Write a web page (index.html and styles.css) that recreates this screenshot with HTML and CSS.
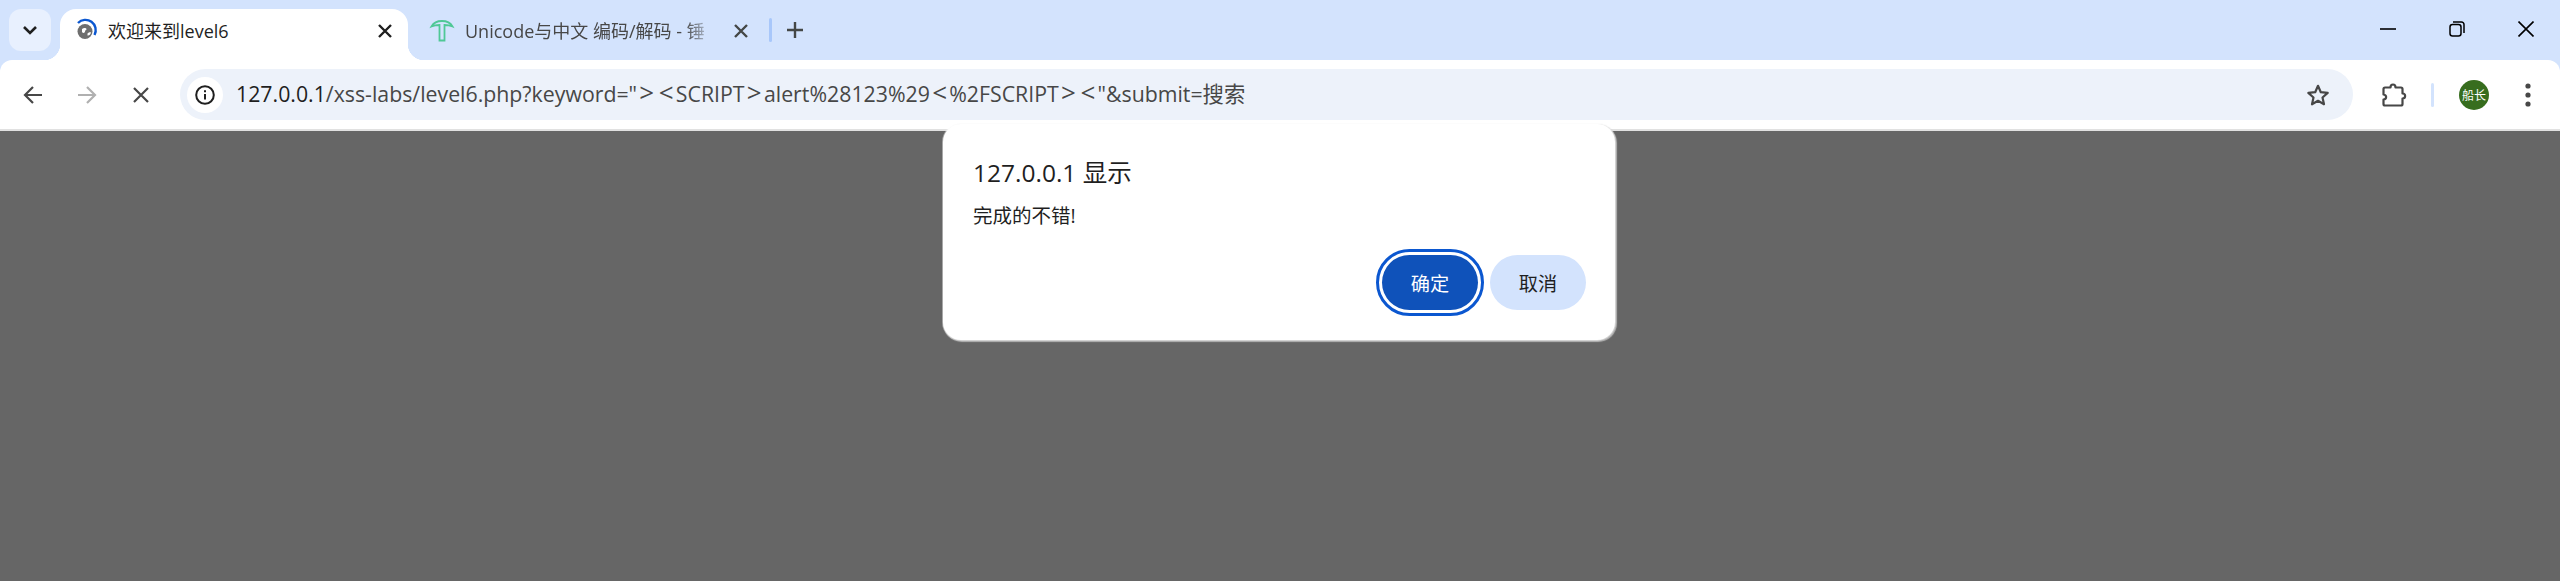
FILE: index.html
```html
<!DOCTYPE html>
<html lang="zh-CN">
<head>
    <meta charset="UTF-8">
    <title>欢迎来到level6</title>
    <link rel="stylesheet" href="styles.css">
</head>
<body>
    <header class="tabstrip">
        <button class="tab-search">
            <svg width="18" height="18" viewBox="0 0 18 18"><path d="M3 6l6 6 6-6" fill="none" stroke="#1f1f1f" stroke-width="2.6"/></svg>
        </button>
        <div class="tab tab-active">
            <svg class="favicon" width="22" height="22" viewBox="0 0 22 22">
                <circle cx="9" cy="11.500" r="7.500" fill="#6e6e6e"/>
                <path d="M6 9c2-1.500 4-1 4.500 0s-1.500 1-1.500 2.500-2 2-3 .5zM11.500 13.500c1-1 3-1.500 3.500-1-.5 2-2 3.500-3.500 3z" fill="#fff"/>
                <path d="M2 3A10.300 10.300 0 0 1 18.500 15" fill="none" stroke="#0b57d0" stroke-width="2.400"/>
            </svg>
            <span class="tab-title">欢迎来到level6</span>
            <svg class="tab-close" width="16" height="16" viewBox="0 0 16 16"><path d="M2 2l12 12M14 2L2 14" stroke="#1f1f1f" stroke-width="2.400"/></svg>
        </div>
        <div class="tab tab-other">
            <svg class="favicon" width="24" height="24" viewBox="0 0 24 24" fill="none" stroke="#4fc896" stroke-width="1.800">
                <path d="M1.500 7.500C4 3 9 2 12 2s8 1 10.500 5.500C19 6 15 6 14.500 6v15.500h-5V6C9 6 5 6 1.500 7.500z"/>
            </svg>
            <span class="tab-title tab-fade">Unicode与中文 编码/解码 - 锤</span>
            <svg class="tab-close" width="16" height="16" viewBox="0 0 16 16"><path d="M2 2l12 12M14 2L2 14" stroke="#444746" stroke-width="2.400"/></svg>
        </div>
        <span class="tab-sep"></span>
        <svg class="new-tab" width="16" height="16" viewBox="0 0 16 16"><path d="M8 0v16M0 8h16" stroke="#444746" stroke-width="2.400"/></svg>
        <div class="window-controls">
            <svg width="16" height="16" viewBox="0 0 16 16"><path d="M0 8h16" stroke="#000" stroke-width="1.600"/></svg>
            <svg width="16" height="16" viewBox="0 0 16 16" fill="none" stroke="#000" stroke-width="1.500"><rect x="1" y="3.500" width="11" height="11.500" rx="2.500"/><path d="M4 1h8.500A2.500 2.500 0 0 1 15 3.500V12"/></svg>
            <svg width="16" height="16" viewBox="0 0 16 16"><path d="M.5.500l15 15M15.500.500l-15 15" stroke="#000" stroke-width="1.600"/></svg>
        </div>
    </header>

    <nav class="toolbar">
        <button class="nav-btn">
            <svg width="20" height="20" viewBox="0 0 20 20" fill="none" stroke="#474747" stroke-width="2.200"><path d="M19 10H2M10 2l-8 8 8 8"/></svg>
        </button>
        <button class="nav-btn">
            <svg width="20" height="20" viewBox="0 0 20 20" fill="none" stroke="#b0b0b0" stroke-width="2.200"><path d="M1 10h17M10 2l8 8-8 8"/></svg>
        </button>
        <button class="nav-btn">
            <svg width="16" height="16" viewBox="0 0 16 16"><path d="M1 1l14 14M15 1L1 15" stroke="#474747" stroke-width="2.200"/></svg>
        </button>
        <div class="omnibox">
            <span class="site-info">
                <svg width="20" height="20" viewBox="0 0 20 20" fill="none" stroke="#1f1f1f" stroke-width="2"><circle cx="10" cy="10" r="8.800"/><path d="M10 9v5.500M10 5.200v2"/></svg>
            </span>
            <span class="url"><b>127.0.0.1</b>/xss-labs/level6.php?keyword="<i>&gt;</i><i>&lt;</i>SCRIPT<i>&gt;</i>alert%28123%29<i>&lt;</i>%2FSCRIPT<i>&gt;</i><i>&lt;</i>"&amp;submit=搜索</span>
            <svg class="star" width="24" height="24" viewBox="0 0 24 24"><path d="M12 2.800l2.800 6.400 6.900.7-5.200 4.600 1.500 6.800-6-3.500-6 3.500 1.500-6.800-5.200-4.600 6.900-.7z" fill="none" stroke="#474747" stroke-width="2.200" stroke-linejoin="round"/></svg>
        </div>
        <button class="nav-btn ext-btn">
            <svg width="26" height="26" viewBox="0 0 26 26" fill="none" stroke="#474747" stroke-width="2.200" stroke-linejoin="round"><path d="M4 5.500h5.500c0-4 5-4 5 0H20a1.500 1.500 0 0 1 1.500 1.500v4.500c3.500 0 3.500 5 0 5V22a1.500 1.500 0 0 1-1.500 1.500H4A1.500 1.500 0 0 1 2.500 22v-4.500c3.500-.5 3.500-4.500 0-5V7A1.500 1.500 0 0 1 4 5.500z"/></svg>
        </button>
        <span class="toolbar-sep"></span>
        <span class="avatar">船长</span>
        <button class="nav-btn menu-btn">
            <svg width="8" height="26" viewBox="0 0 8 26" fill="#474747"><circle cx="4" cy="4" r="2.600"/><circle cx="4" cy="13" r="2.600"/><circle cx="4" cy="22" r="2.600"/></svg>
        </button>
    </nav>

    <main class="page"></main>

    <div class="dialog">
        <h2 class="dialog-title">127.0.0.1 显示</h2>
        <p class="dialog-text">完成的不错!</p>
        <div class="dialog-buttons">
            <button class="btn btn-ok">确定</button>
            <button class="btn btn-cancel">取消</button>
        </div>
    </div>
</body>
</html>
```

FILE: styles.css
```css
html, body {
    margin: 0;
    height: 581px;
    overflow: hidden;
}
body {
    display: flex;
    flex-direction: column;
    font-family: "Open Sans", "Noto Sans CJK SC", sans-serif;
    background-color: #d3e3fd;
    color: #1f1f1f;
}
button {
    border: none;
    background: none;
    padding: 0;
    font-family: inherit;
}

/* tabs */
.tabstrip {
    height: 60px;
    flex-shrink: 0;
    display: flex;
    align-items: flex-start;
    background-color: #d3e3fd;
}
.tab-search {
    width: 42px;
    height: 42px;
    margin: 9px 0 0 9px;
    display: flex;
    align-items: center;
    justify-content: center;
    border-radius: 12px;
    background-color: #e8f0fe;
}
.tab {
    height: 51px;
    margin-top: 9px;
    box-sizing: border-box;
    display: flex;
    align-items: center;
    position: relative;
}
.tab-active {
    width: 348px;
    margin-left: 9px;
    padding: 0 15px 8px 16px;
    background-color: #fff;
    border-radius: 16px 16px 0 0;
}
.tab-active::before,
.tab-active::after {
    content: "";
    position: absolute;
    bottom: 0;
    width: 16px;
    height: 16px;
}
.tab-active::before {
    left: -16px;
    background: radial-gradient(circle at 0 0, transparent 16px, #fff 16.500px);
}
.tab-active::after {
    right: -16px;
    background: radial-gradient(circle at 100% 0, transparent 16px, #fff 16.500px);
}
.tab-other {
    width: 348px;
    margin-left: 10px;
    padding: 0 15px 8px 12px;
}
.favicon {
    flex-shrink: 0;
    overflow: visible;
}
.tab-title {
    flex: 1;
    margin-left: 10px;
    font-size: 18px;
    line-height: 24px;
    white-space: nowrap;
    overflow: hidden;
}
.tab-other .tab-title {
    flex: none;
    width: 250px;
    margin-left: 11px;
    color: #474747;
}
.tab-fade {
    -webkit-mask-image: linear-gradient(to right, #000 88%, transparent 100%);
    mask-image: linear-gradient(to right, #000 88%, transparent 100%);
}
.tab-close {
    flex-shrink: 0;
    margin-left: 12px;
}
.tab-other .tab-close {
    margin-left: 18px;
}
.tab-sep {
    width: 3px;
    height: 24px;
    margin: 18px 0 0 3px;
    border-radius: 2px;
    background-color: #a8c7fa;
}
.new-tab {
    margin: 22px 0 0 15px;
}
.window-controls {
    margin: 21px 26px 0 auto;
    display: flex;
    gap: 53px;
}

/* toolbar */
.toolbar {
    height: 69px;
    flex-shrink: 0;
    display: flex;
    align-items: center;
    padding: 0 14px 0 15px;
    gap: 18px;
    background-color: #fff;
    border-bottom: 2px solid #e1e1e1;
    border-radius: 12px 12px 0 0;
}
.nav-btn {
    width: 36px;
    height: 36px;
    flex-shrink: 0;
    display: flex;
    align-items: center;
    justify-content: center;
}
.omnibox {
    flex: 1;
    height: 51px;
    margin-left: 3px;
    display: flex;
    align-items: center;
    padding: 0 23px 0 7px;
    background-color: #edf2fa;
    border-radius: 26px;
}
.site-info {
    width: 36px;
    height: 36px;
    display: flex;
    align-items: center;
    justify-content: center;
    border-radius: 50%;
    background-color: #fff;
}
.url {
    flex: 1;
    margin-left: 13px;
    padding-bottom: 2px;
    font-size: 21.300px;
    line-height: 30px;
    color: #474747;
    white-space: nowrap;
}
.url b {
    font-weight: 400;
    color: #1f1f1f;
}
.url i {
    font-style: normal;
    font-size: 26px;
    line-height: 0;
    padding: 0 2.250px;
}
.ext-btn {
    margin-left: 5px;
}
.toolbar-sep {
    width: 3px;
    height: 24px;
    margin-left: 1px;
    border-radius: 2px;
    background-color: #d3e3fd;
}
.avatar {
    width: 30px;
    height: 30px;
    margin-left: 7px;
    flex-shrink: 0;
    display: flex;
    align-items: center;
    justify-content: center;
    border-radius: 50%;
    background-color: #376d1e;
    color: #fff;
    font-size: 12px;
}
.menu-btn {
    margin-left: 3px;
}

.page {
    flex: 1;
    background-color: #666;
}

/* alert dialog */
.dialog {
    position: absolute;
    left: 943px;
    top: 124px;
    width: 672px;
    height: 216px;
    box-sizing: border-box;
    padding: 32px 29px 0 30px;
    background-color: #fff;
    border-radius: 18px;
    box-shadow: 0 0 0 1px rgba(255, 255, 255, 0.4), 1px 1px 1px 1px rgba(200, 200, 200, 0.8);
}
.dialog-title {
    margin: 0;
    font-size: 24.500px;
    font-weight: 400;
    line-height: 34px;
}
.dialog-text {
    margin: 12px 0 0;
    font-size: 19.500px;
    line-height: 28px;
}
.dialog-buttons {
    margin-top: 25px;
    display: flex;
    justify-content: flex-end;
    gap: 12px;
}
.btn {
    width: 96px;
    height: 55px;
    border-radius: 28px;
    font-size: 19.200px;
}
.btn-ok {
    background-color: #0f52ba;
    color: #fff;
    outline: 3px solid #0b57d0;
    outline-offset: 3px;
}
.btn-cancel {
    background-color: #d3e3fd;
    color: #1f1f1f;
}
```
